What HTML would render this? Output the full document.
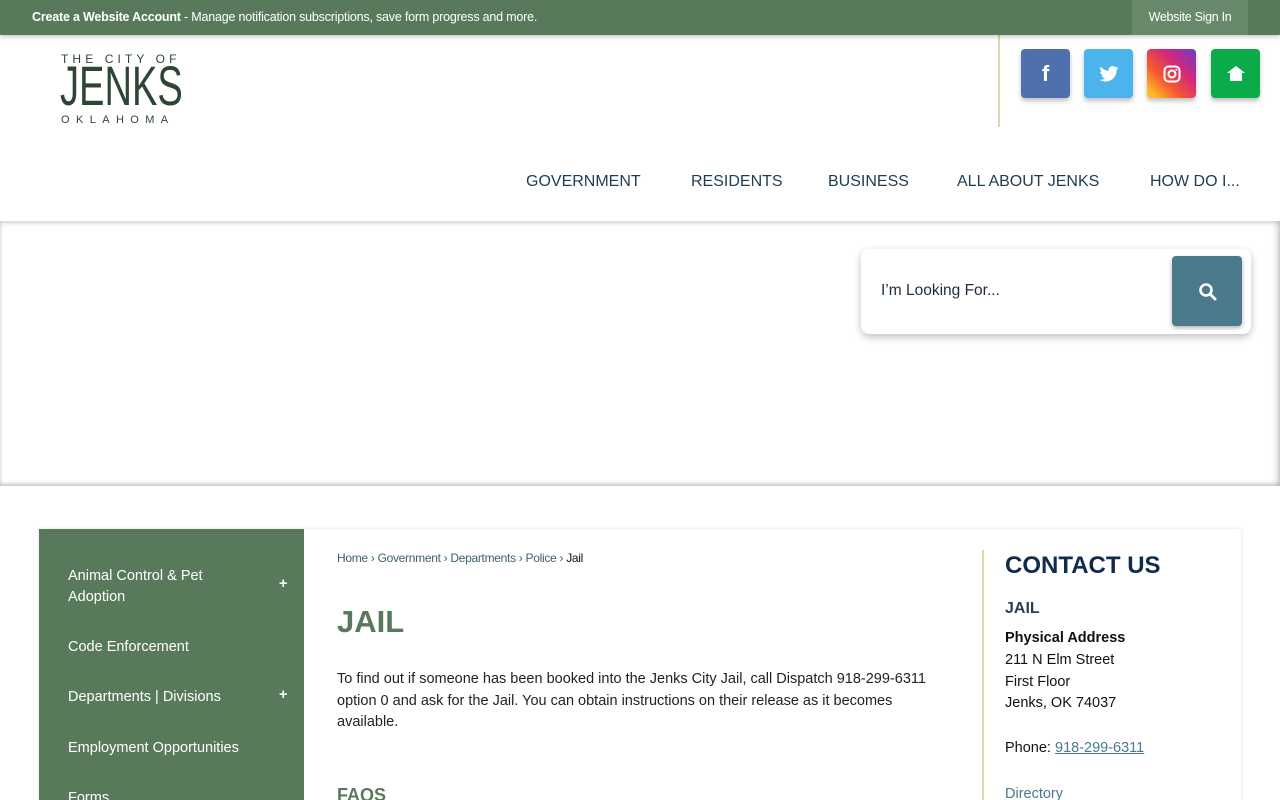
<!DOCTYPE html>
<html style="width:1280px;height:800px;overflow:hidden"><head><meta charset="utf-8"><style>
*{margin:0;padding:0;box-sizing:border-box}
body{width:1280px;height:800px;overflow:hidden;background:#fff;font-family:"Liberation Sans",sans-serif;position:relative}
.top{position:absolute;left:0;top:0;width:1280px;height:35px;background:#587a5b;box-shadow:0 2px 4px rgba(0,0,0,.2);z-index:3}
.top .t{position:absolute;left:32px;top:10px;font-size:12.5px;color:#fff;letter-spacing:-.2px}
.top .s{position:absolute;left:1132px;top:0;width:116px;height:35px;background:#698a6a;color:#fff;font-size:12.5px;text-align:center;line-height:35px;letter-spacing:-.3px}
.logo{position:absolute;left:61px;color:#2d4534;font-family:"Liberation Sans",sans-serif;white-space:nowrap}
.vline{position:absolute;left:998px;top:35px;width:2px;height:92px;background:#e0d6a6}
.soc{position:absolute;top:49px;width:49px;height:49px;border-radius:4px;box-shadow:0 3px 5px rgba(0,0,0,.25);display:flex;align-items:center;justify-content:center}
.nav{position:absolute;top:173px;font-size:16px;color:#1d3d55}
.hero{position:absolute;left:0;top:221px;width:1280px;height:265px;box-shadow:inset 0 3px 4px rgba(0,0,0,.12),inset -5px 0 4px rgba(0,0,0,.1),inset 0 -3px 3px rgba(0,0,0,.15)}
.search{position:absolute;left:861px;top:249px;width:390px;height:85px;background:#fff;border-radius:8px;box-shadow:0 3px 8px rgba(0,0,0,.25)}
.sbtn{position:absolute;left:311px;top:7px;width:70px;height:70px;background:#4a7a8c;border-radius:4px;box-shadow:0 2px 4px rgba(0,0,0,.3)}
.panel{position:absolute;left:39px;top:529px;width:1202px;height:300px;background:#fff;box-shadow:0 0 4px rgba(0,0,0,.12)}
.side{position:absolute;left:39px;top:529px;width:265px;height:271px;background:#587a5b;color:#fff;font-size:14.5px;overflow:hidden}
.side div{position:absolute;left:29px}
.plus{left:240px!important;font-weight:bold}
.bc{position:absolute;left:337px;top:551px;font-size:12px;color:#3d6070;letter-spacing:-.3px}
h1{position:absolute;left:337px;top:604px;font-size:31px;color:#587a5b;font-weight:bold}
.p{position:absolute;left:337px;top:669px;width:620px;font-size:14.5px;line-height:21.5px;color:#222}
.cl{position:absolute;left:982px;top:550px;width:2px;height:260px;background:#e0d6a6}
.c{position:absolute;left:1005px;font-size:14.5px;color:#111}
</style></head><body>
<div class="top"><div class="t"><b>Create a Website Account</b> - Manage notification subscriptions, save form progress and more.</div><div class="s">Website Sign In</div></div>
<div class="logo" style="top:52px;font-size:12px;letter-spacing:4.1px">THE CITY OF</div>
<div class="logo" style="top:58px;left:60px;font-size:56px;line-height:56px;transform:scaleX(.68);transform-origin:left">JENKS</div>
<div class="logo" style="top:114px;font-size:11px;letter-spacing:6.4px">OKLAHOMA</div>
<div class="vline"></div>
<div class="soc" style="left:1021px;background:#5070ad;color:#fff;font-weight:bold;font-size:22px">f</div>
<div class="soc" style="left:1084px;background:#4bb4ec"><svg width="20" height="16" viewBox="0 0 24 20"><path fill="#fff" d="M24 2.4a10 10 0 0 1-2.8.8A5 5 0 0 0 23.3.4a10 10 0 0 1-3.1 1.2A4.9 4.9 0 0 0 11.8 6 14 14 0 0 1 1.7.9a4.9 4.9 0 0 0 1.5 6.6 5 5 0 0 1-2.2-.6 4.9 4.9 0 0 0 3.9 4.8 5 5 0 0 1-2.200.1 4.9 4.9 0 0 0 4.6 3.4A9.9 9.9 0 0 1 0 17.2 14 14 0 0 0 7.5 19.4c9.1 0 14-7.5 14-14v-.6A10 10 0 0 0 24 2.4z"/></svg></div>
<div class="soc" style="left:1147px;background:linear-gradient(45deg,#fdb827 10%,#f6592f 35%,#d3287a 65%,#6a3cc9 100%)"><svg width="18" height="18" viewBox="0 0 18 18"><rect x="1.5" y="1.5" width="15" height="15" rx="4" fill="none" stroke="#fff" stroke-width="2"/><circle cx="9" cy="9" r="3.5" fill="none" stroke="#fff" stroke-width="2"/><circle cx="13.3" cy="4.7" r="1" fill="#fff"/></svg></div>
<div class="soc" style="left:1211px;background:#0bab4a"><svg width="20" height="18" viewBox="0 0 20 18"><path fill="#fff" d="M10 1 1 8h3v8h12V8h3z"/></svg></div>
<div class="nav" style="left:526px">GOVERNMENT</div>
<div class="nav" style="left:691px">RESIDENTS</div>
<div class="nav" style="left:828px">BUSINESS</div>
<div class="nav" style="left:957px">ALL ABOUT JENKS</div>
<div class="nav" style="left:1150px">HOW DO I...</div>
<div class="hero"></div>
<div class="search"><div style="position:absolute;left:20px;top:33px;font-size:15.5px;color:#1d2d3d">I’m Looking For...</div><div class="sbtn"><svg style="position:absolute;left:26px;top:26px" width="20" height="20" viewBox="0 0 20 20"><circle cx="8" cy="8" r="5.5" fill="none" stroke="#fff" stroke-width="2.6"/><path d="M12 12l5 5" stroke="#fff" stroke-width="3" stroke-linecap="round"/></svg></div></div>
<div class="panel"></div>
<div class="side">
<div style="top:37px;line-height:21px">Animal Control &amp; Pet<br>Adoption</div><div class="plus" style="top:47px">+</div>
<div style="top:110px">Code Enforcement</div>
<div style="top:160px">Departments | Divisions</div><div class="plus" style="top:158px">+</div>
<div style="top:211px">Employment Opportunities</div>
<div style="top:261px">Forms</div>
</div>
<div class="bc">Home › Government › Departments › Police › <span style="color:#111">Jail</span></div>
<h1>JAIL</h1>
<div class="p">To find out if someone has been booked into the Jenks City Jail, call Dispatch 918-299-6311 option 0 and ask for the Jail. You can obtain instructions on their release as it becomes available.</div>
<div style="position:absolute;left:337px;top:785px;font-size:18px;font-weight:bold;color:#587a5b">FAQS</div>
<div class="cl"></div>
<div class="c" style="top:552px;font-size:24px;font-weight:bold;color:#0f2c4b">CONTACT US</div>
<div class="c" style="top:600px;font-size:16px;font-weight:bold;color:#2b3f5a">JAIL</div>
<div class="c" style="top:628px;line-height:21.8px"><b>Physical Address</b><br>211 N Elm Street<br>First Floor<br>Jenks, OK 74037</div>
<div class="c" style="top:740px">Phone: <span style="color:#4a7a8c;text-decoration:underline">918-299-6311</span></div>
<div class="c" style="top:786px;color:#4a7a8c">Directory</div>
</body></html>
